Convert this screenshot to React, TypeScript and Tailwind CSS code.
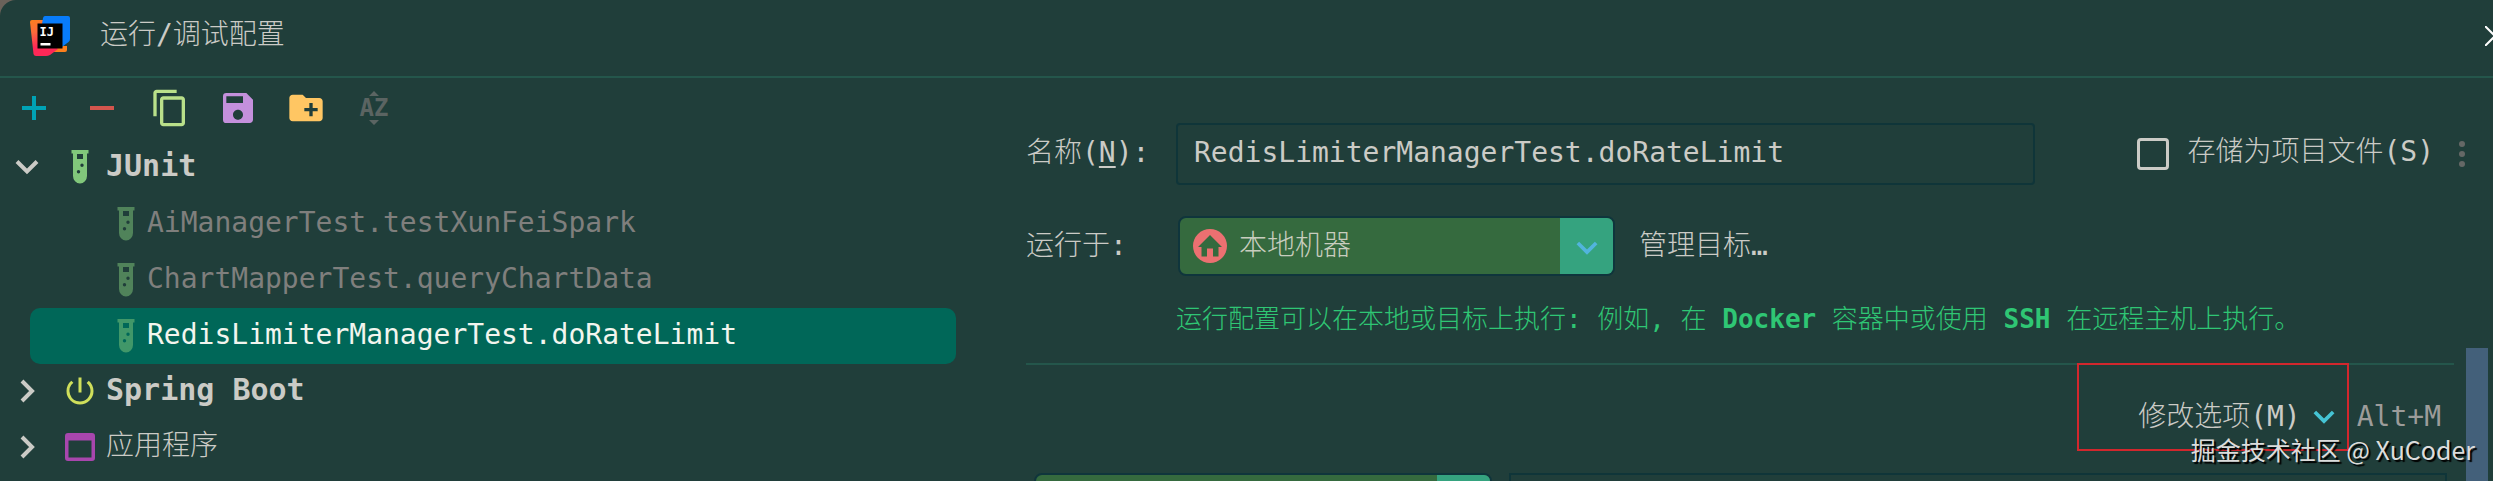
import type { ReactNode } from 'react';
import { MdContentCopy, MdCreateNewFolder, MdPowerSettingsNew, MdSave } from 'react-icons/md';

const MONO = 'font-["DejaVu_Sans_Mono","Noto_Sans_CJK_SC",monospace]';

function IdeaLogo() {
    return (
        <svg viewBox="0 0 40 40" className="w-10 h-10 shrink-0" aria-hidden="true">
            <defs>
                <linearGradient id="logoLeft" x1="0" y1="0" x2="0.3" y2="1">
                    <stop offset="0" stopColor="#fc801d" />
                    <stop offset="0.35" stopColor="#fd6a3a" />
                    <stop offset="0.75" stopColor="#fe2857" />
                </linearGradient>
            </defs>
            <path d="M24 30h13v4q0 2-2 2h-11z" fill="#fc801d" />
            <path d="M2 4h16v20l10 9-8 6q-2 1-4 1H6q-2 0-2.500-2L0 6q0-2 2-2z" fill="url(#logoLeft)" />
            <path d="M15 0h23q2 0 2 2v21q0 2-1.500 3L32 31V8H12l1-6q.5-2 2-2z" fill="#087cfa" />
            <path d="M7.500 7.500h25v25h-25z" fill="#000" />
            <text x="9.500" y="20" fill="#fff" fontSize="12" fontWeight="bold" fontFamily="DejaVu Sans Mono, monospace">IJ</text>
            <path d="M10.500 27h10v2.500h-10z" fill="#fff" />
        </svg>
    );
}

function TubeIcon({ dim = false }: { dim?: boolean }) {
    return (
        <svg viewBox="0 0 18 34" className={`w-[18px] h-[34px] shrink-0 ${dim ? 'opacity-50' : ''}`} aria-hidden="true">
            <path
                fill="#81c77b"
                fillRule="evenodd"
                d="M.5 0h17v3.500H16V26a7 7.500 0 0 1-14 0V3.500H.5zM6 4v5h6V4zM11 13.500a1.700 1.700 0 1 0 .01 3.400a1.700 1.700 0 1 0-.01-3.400zM7.500 20a1.700 1.700 0 1 0 .01 3.400a1.700 1.700 0 1 0-.01-3.400z"
            />
        </svg>
    );
}

function WindowIcon() {
    return (
        <svg viewBox="0 0 30 28" className="w-[30px] h-7 shrink-0" aria-hidden="true">
            <path fill="#a846ad" fillRule="evenodd" d="M3 0h24q3 0 3 3v22q0 3-3 3H3q-3 0-3-3V3q0-3 3-3zM3.500 7.500v17h23v-17z" />
        </svg>
    );
}

function SortIcon() {
    return (
        <svg viewBox="0 0 40 40" className="w-10 h-10" aria-hidden="true">
            <path d="M15 8l5-5 5 5zM15 32l5 5 5-5z" fill="#5b6462" />
            <text x="20" y="28" textAnchor="middle" fill="#5b6462" fontSize="24" fontWeight="bold" fontFamily="DejaVu Sans Mono, monospace">AZ</text>
        </svg>
    );
}

function HomeIcon() {
    return (
        <svg viewBox="0 0 34 34" className="w-[34px] h-[34px]" aria-hidden="true">
            <circle cx="17" cy="17" r="17" fill="#ec7071" />
            <path d="M17 6L5 18h3.500v9.500H14v-8h6v8h5.500V18H29z" fill="#356a3e" />
        </svg>
    );
}

function Chevron({ open, className }: { open: boolean; className: string }) {
    return (
        <svg viewBox="0 0 24 24" className={className} fill="none" stroke="currentColor" strokeWidth="4" aria-hidden="true">
            <path d={open ? 'M2 6.500l10 10 10-10' : 'M7 2l10 10L7 22'} />
        </svg>
    );
}

function GroupRow({ label, open, bold, icon }: { label: string; open: boolean; bold: boolean; icon: ReactNode }) {
    return (
        <li>
            <button className="flex items-center w-full h-14 pl-[15px] pb-0.5 text-left text-[#cbcbc6]" aria-expanded={open}>
                <Chevron open={open} className="w-6 h-6 shrink-0" />
                <span className="flex justify-center w-9 ml-[23px] mr-2">{icon}</span>
                <span className={`leading-9 pb-0.5 ${bold ? 'font-bold text-[30px]' : 'font-light text-[28px]'}`}>{label}</span>
            </button>
        </li>
    );
}

function ConfigRow({ label, active = false }: { label: string; active?: boolean }) {
    return (
        <li className={`ml-[30px] mr-[70px] rounded-[10px] ${active ? 'bg-[#006758] text-[#f2f5ee]' : 'text-[#7f7f7d]'}`}>
            <button className="flex items-center gap-3 w-full h-14 pl-[87px] text-left">
                <TubeIcon dim />
                <span className="leading-9 pb-0.5">{label}</span>
            </button>
        </li>
    );
}

function TargetSelect({ id, label, className, children }: { id: string; label: string; className: string; children?: ReactNode }) {
    return (
        <div className={`relative shrink-0 h-[60px] ${className}`}>
            <select
                id={id}
                aria-label={label}
                className="w-full h-full appearance-none rounded-lg border-2 border-[#0f353c] bg-[#356a3e] pl-[59px] font-light text-[#c8cdbe] outline-none"
            >
                <option>{label}</option>
            </select>
            <span className="absolute left-[15px] top-[13px] pointer-events-none">{children}</span>
            <span className="absolute inset-y-0.5 right-0.5 w-[53px] flex items-center justify-center pt-1 rounded-r-md bg-[#35a37f] text-[#52b4dd] pointer-events-none">
                <Chevron open className="w-[22px] h-[22px]" />
            </span>
        </div>
    );
}

export default function App() {
    return (
        <div className="h-screen overflow-hidden bg-[#6a625a]">
            <div className={`relative flex flex-col h-full overflow-hidden rounded-tl-[16px] bg-[#203e3a] text-[28px] text-[#cbcbc6] ${MONO}`}>
                <header className="flex items-center shrink-0 h-[78px] pl-[30px] pb-1 border-b-2 border-[#24564b]">
                    <IdeaLogo />
                    <h1 className="ml-[30px] leading-9 pb-0.5 font-light">运行/调试配置</h1>
                    <button className="ml-auto -mr-3 text-white" aria-label="关闭">
                        <svg viewBox="0 0 20 20" className="w-5 h-5" fill="none" stroke="currentColor" strokeWidth="2">
                            <path d="M0 0l20 20M20 0L0 20" />
                        </svg>
                    </button>
                </header>

                <div className="flex flex-1 min-h-0">
                    <aside className="w-[1026px] shrink-0">
                        {/* Toolbar */}
                        <div className="flex items-center gap-7 h-[62px] pl-[14px] pb-0.5">
                            <button className="flex items-center justify-center w-10 h-10" aria-label="添加">
                                <svg viewBox="0 0 24 24" className="w-6 h-6" fill="#00a2b5"><path d="M10 0h4v10h10v4H14v10h-4V14H0v-4h10z" /></svg>
                            </button>
                            <button className="flex items-center justify-center w-10 h-10" aria-label="移除">
                                <svg viewBox="0 0 24 24" className="w-6 h-6" fill="#d4554d"><path d="M0 10h24v4H0z" /></svg>
                            </button>
                            <button aria-label="复制"><MdContentCopy className="w-10 h-10 text-[#b9e08a]" /></button>
                            <button aria-label="保存"><MdSave className="w-10 h-10 text-[#c490dc]" /></button>
                            <button aria-label="新建文件夹"><MdCreateNewFolder className="w-10 h-10 text-[#ffc663]" /></button>
                            <button aria-label="排序" disabled><SortIcon /></button>
                        </div>

                        {/* Configuration tree */}
                        <ul>
                            <GroupRow label="JUnit" open bold icon={<TubeIcon />} />
                            <ConfigRow label="AiManagerTest.testXunFeiSpark" />
                            <ConfigRow label="ChartMapperTest.queryChartData" />
                            <ConfigRow label="RedisLimiterManagerTest.doRateLimit" active />
                            <GroupRow label="Spring Boot" open={false} bold icon={<MdPowerSettingsNew className="w-9 h-9 text-[#cfdf5b]" />} />
                            <GroupRow label="应用程序" open={false} bold={false} icon={<WindowIcon />} />
                        </ul>
                    </aside>

                    <main className="flex-1 min-w-0 pt-[45px]">
                        <div className="flex items-center">
                            <label htmlFor="name" className="w-[150px] shrink-0 leading-9 pb-0.5 font-light">名称(<u className="underline-offset-4">N</u>):</label>
                            <input
                                id="name"
                                defaultValue="RedisLimiterManagerTest.doRateLimit"
                                className="flex-1 min-w-0 h-[62px] px-4 pb-1 rounded-sm border-2 border-[#0f3539] bg-transparent outline-none"
                            />
                            <input id="store" type="checkbox" className="appearance-none w-8 h-8 ml-[102px] shrink-0 rounded border-[3px] border-[#cbcbc6]" />
                            <label htmlFor="store" className="ml-[18px] leading-9 pb-1 font-light whitespace-nowrap">存储为项目文件(S)</label>
                            <button className="flex flex-col items-center gap-1 w-2 ml-6 mr-[27px]" aria-label="更多">
                                <span className="w-1.5 h-1.5 rounded-full bg-[#656866]" />
                                <span className="w-1.5 h-1.5 rounded-full bg-[#656866]" />
                                <span className="w-1.5 h-1.5 rounded-full bg-[#656866]" />
                            </button>
                        </div>

                        <div className="flex items-center mt-[31px]">
                            <label htmlFor="target" className="w-[152px] shrink-0 leading-9 font-light">运行于:</label>
                            <TargetSelect id="target" label="本地机器" className="w-[437px]">
                                <HomeIcon />
                            </TargetSelect>
                            <a href="#targets" className="ml-6 leading-9 font-light">管理目标…</a>
                        </div>

                        <p className="ml-[150px] mt-[23px] leading-10 text-[26px] font-light text-[#2fc674]">
                            运行配置可以在本地或目标上执行: 例如, 在 <span className="font-bold">Docker</span> 容器中或使用 <span className="font-bold">SSH</span> 在远程主机上执行。
                        </p>

                        <hr className="mt-6 mr-[39px] border-t-2 border-[#24564b]" />

                        <div className="flex items-center justify-end h-14 mt-6 mr-[52px]">
                            <div className="relative">
                                <button className="flex items-center gap-3 font-light">
                                    <span className="leading-7">修改选项(M)</span>
                                    <Chevron open className="w-[22px] h-[22px] text-[#45c4d4]" />
                                </button>
                                <span className="absolute -left-[61px] -right-3.5 -top-10 -bottom-5 border-2 border-[#d2272d] pointer-events-none" />
                            </div>
                            <span className="ml-[22px] leading-7 text-[#9c9c9a]">Alt+M</span>
                        </div>

                        <div className="flex mt-7 ml-2 mr-[46px]">
                            <TargetSelect id="jdk" label="java 8" className="w-[458px]" />
                            <input aria-label="VM" className="flex-1 min-w-0 h-[60px] ml-[17px] border-2 border-[#0f3539] bg-transparent" />
                        </div>
                    </main>
                </div>

                {/* Scrollbar thumb */}
                <div className="absolute right-[5px] top-[348px] bottom-0 w-[22px] bg-[#43607a]" />

                {/* Watermark */}
                <div className="absolute right-[18px] bottom-5 leading-6 text-[25px] text-[#dcdcdc] font-['Noto_Sans_CJK_SC',sans-serif] [text-shadow:2px_2px_1px_#000]">
                    掘金技术社区 @ XuCoder
                </div>
            </div>
        </div>
    );
}
